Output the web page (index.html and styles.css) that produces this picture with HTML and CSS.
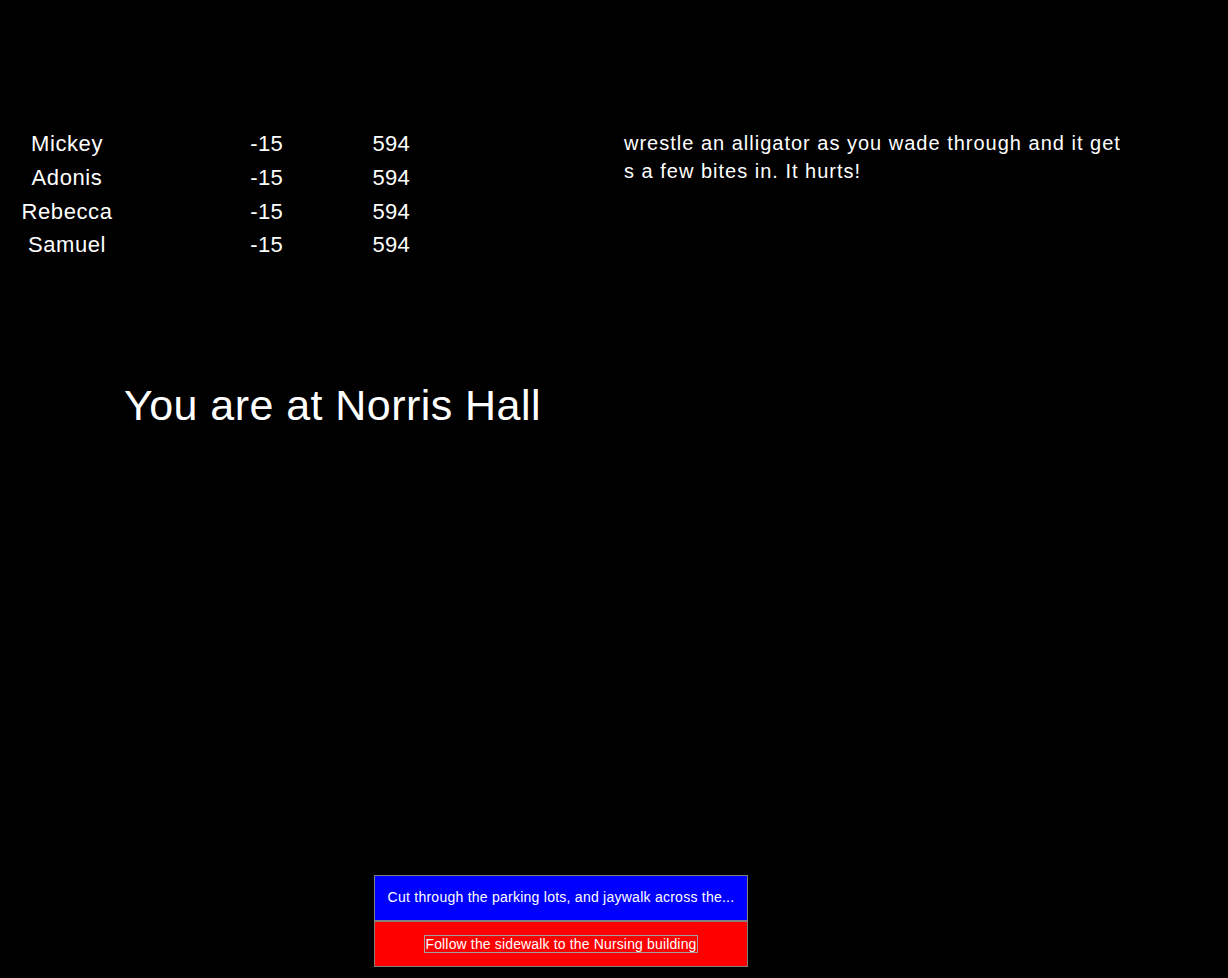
FILE: index.html
```html
<!DOCTYPE html>
<html>
<head>
<meta charset="utf-8">
<title>Norris Hall</title>
<link rel="stylesheet" href="styles.css">
</head>
<body>
<div class="page">
  <div class="top">
    <div class="party">
      <div class="name">Mickey</div><div class="num">-15</div><div class="num">594</div>
      <div class="name">Adonis</div><div class="num">-15</div><div class="num">594</div>
      <div class="name">Rebecca</div><div class="num">-15</div><div class="num">594</div>
      <div class="name">Samuel</div><div class="num">-15</div><div class="num">594</div>
    </div>
    <div class="message">wrestle an alligator as you wade through and it gets a few bites in. It hurts!</div>
  </div>
  <h1 class="location">You are at Norris Hall</h1>
  <div class="choices">
    <button class="choice blue">Cut through the parking lots, and jaywalk across the...</button>
    <button class="choice red"><span class="focus">Follow the sidewalk to the Nursing building</span></button>
  </div>
</div>
</body>
</html>
```
FILE: styles.css
```css
html, body {
  margin: 0;
  padding: 0;
  background: #000;
}
body {
  font-family: "Liberation Sans", Arial, sans-serif;
  color: #fff;
}
.page {
  height: 978px;
  display: flex;
  flex-direction: column;
  box-sizing: border-box;
  padding-bottom: 11px;
}
.top {
  display: flex;
  padding-top: 126px;
}
.party {
  width: 624px;
  display: grid;
  grid-template-columns: 134px 149px 127px;
  grid-auto-rows: 33.8px;
  align-content: start;
  font-size: 22px;
  line-height: 33.8px;
  letter-spacing: 0.6px;
  padding-top: 1px;
}
.name { text-align: center; }
.num { text-align: right; letter-spacing: 0.3px; }
.message {
  width: 500px;
  margin-top: 3px;
  font-size: 20px;
  line-height: 28px;
  letter-spacing: 1px;
  word-break: break-all;
}
.location {
  margin: 0;
  margin-top: 119px;
  padding-left: 124px;
  font-weight: normal;
  font-size: 43px;
  line-height: 48px;
  letter-spacing: 0.45px;
}
.choices {
  margin-top: auto;
  margin-left: 374px;
  width: 374px;
  display: flex;
  flex-direction: column;
}
.choice {
  height: 46px;
  margin: 0;
  border: 1px solid #808080;
  color: #fff;
  font-family: "Liberation Sans", Arial, sans-serif;
  font-size: 14px;
  padding: 0;
  text-align: center;
}
.blue { background: #0000ff; letter-spacing: 0.25px; padding-bottom: 2px; }
.red { background: #ff0000; letter-spacing: 0.15px; }
.focus {
  outline: 1px solid #a0a0a0;
}
```
